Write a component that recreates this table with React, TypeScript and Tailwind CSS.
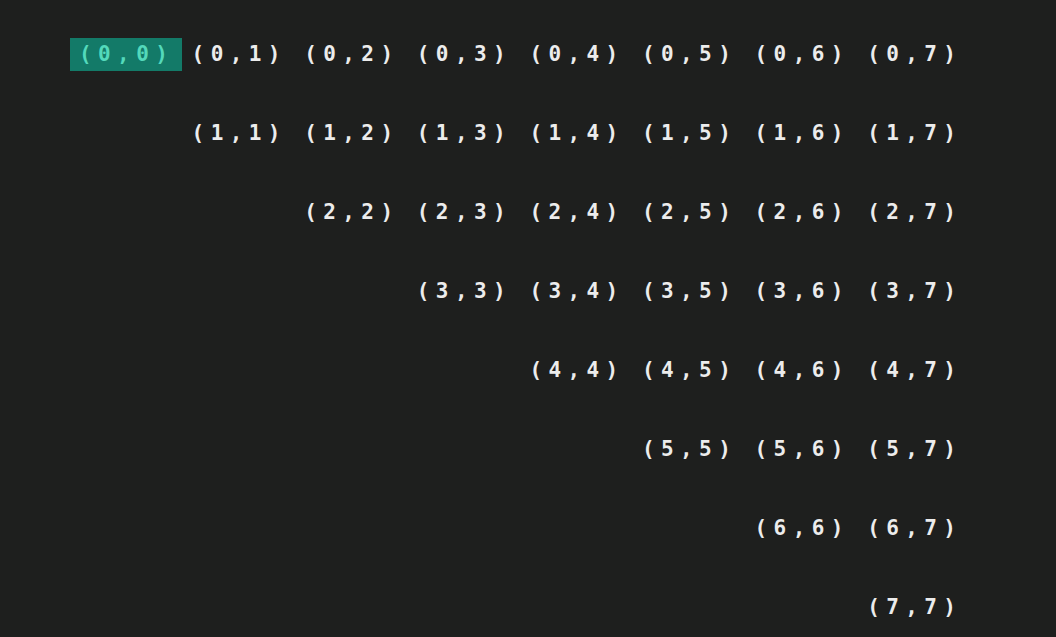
import React from "react";

export default function App() {
  const rows = Array.from({ length: 8 }, (_, i) => i);
  return (
    <div className="w-[1056px] h-[637px] bg-[#1e1f1e] overflow-hidden pt-[38px] pl-[70px]">
      <div className="grid grid-cols-[repeat(8,112.6px)] gap-y-[46px]">
        {rows.map((r) =>
          rows.map((c) => {
            if (c < r) return <div key={`${r}-${c}`} className="h-[33px]" />;
            const hl = r === 0 && c === 0;
            return (
              <div
                key={`${r}-${c}`}
                className={`h-[33px] flex items-center pl-[9px] text-[21px] tracking-[6.4px] font-semibold font-['DejaVu_Sans_Mono',monospace] ${
                  hl ? "bg-[#137a68] text-[#53d9bb] w-[112px]" : "text-[#ececec]"
                }`}
              >
                ({r},{c})
              </div>
            );
          })
        )}
      </div>
    </div>
  );
}
